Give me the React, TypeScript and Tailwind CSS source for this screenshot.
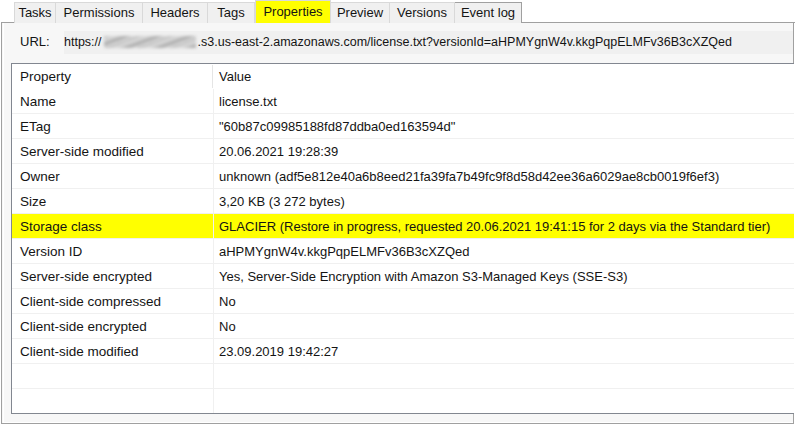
const tabs = [
  { label: 'Tasks', w: 'w-[42px]' },
  { label: 'Permissions', w: 'w-[87px]' },
  { label: 'Headers', w: 'w-[65px]' },
  { label: 'Tags', w: 'w-[47px]' },
  { label: 'Properties', w: 'w-[76px]', active: true },
  { label: 'Preview', w: 'w-[59px]' },
  { label: 'Versions', w: 'w-[65px]' },
  { label: 'Event log', w: 'w-[67px]', last: true },
]

const rows: [string, string][] = [
  ['Name', 'license.txt'],
  ['ETag', '"60b87c09985188fd87ddba0ed163594d"'],
  ['Server-side modified', '20.06.2021 19:28:39'],
  ['Owner', 'unknown (adf5e812e40a6b8eed21fa39fa7b49fc9f8d58d42ee36a6029ae8cb0019f6ef3)'],
  ['Size', '3,20 KB (3 272 bytes)'],
  ['Storage class', 'GLACIER (Restore in progress, requested 20.06.2021 19:41:15 for 2 days via the Standard tier)'],
  ['Version ID', 'aHPMYgnW4v.kkgPqpELMFv36B3cXZQed'],
  ['Server-side encrypted', 'Yes, Server-Side Encryption with Amazon S3-Managed Keys (SSE-S3)'],
  ['Client-side compressed', 'No'],
  ['Client-side encrypted', 'No'],
  ['Client-side modified', '23.09.2019 19:42:27'],
  ['', ''],
  ['', ''],
]

export default function App() {
  return (
    <div className="w-[795px] h-[425px] bg-white overflow-hidden text-[13px] text-[#141414] font-['Liberation_Sans',Arial,sans-serif]">
      {/* tab strip */}
      <div className="flex items-end h-[23px] pl-[13px] border-b border-[#a0a0a0] ml-[1px]">
        {tabs.map((t) => (
          <div
            key={t.label}
            className={
              t.active
                ? `${t.w} h-[23px] -mb-px bg-[#ffff00] border border-b-0 border-[#d9d9d9] flex items-center justify-center pb-[1px]`
                : `${t.w} h-[21px] -mb-px bg-[#f0f0f0] border-t border-r border-[#d9d9d9] flex items-center justify-center ${
                    t.last ? 'border-r-[#a0a0a0] border-t-[#a0a0a0]' : ''
                  } ${t.label === 'Tasks' ? 'border-l' : ''}`
            }
          >
            {t.label}
          </div>
        ))}
      </div>

      {/* panel */}
      <div className="ml-[1px] w-[793px] h-[401px] border-l border-r border-b border-[#a0a0a0] bg-[#f7f7f7]">
        <div className="h-full border-l border-b border-white ml-[1px] pl-[7px] pb-[8px] flex flex-col">
          {/* url row */}
          <div className="flex items-center h-[24px] mt-[7px] mb-[9px]">
            <div className="w-[53px] pl-[9px]">URL:</div>
            <div className="flex-1 h-[23px] bg-[#f0f0f0] flex items-center whitespace-nowrap overflow-hidden text-[12.5px]">
              <span>https://</span>
              <span className="inline-block w-[92px] h-[12px] mx-[2px] blur-[1.5px] bg-[repeating-linear-gradient(160deg,#bdbdbd_0px,#dcdcdc_4px,#a8a8a8_8px,#e6e6e6_11px)]" />
              <span>.s3.us-east-2.amazonaws.com/license.txt?versionId=aHPMYgnW4v.kkgPqpELMFv36B3cXZQed</span>
            </div>
          </div>

          {/* properties table */}
          <div className="flex-1 border-l border-t border-b border-[#828790] bg-white overflow-hidden -mr-[1px]">
            <div className="flex h-[25px] items-center leading-[16px]">
              <div className="w-[201px] pl-[8px] h-[23px] pt-[1px] flex items-center border-r border-[#e5e5e5] text-[13.5px]">Property</div>
              <div className="pl-[6px] pt-[1px]">Value</div>
            </div>
            {rows.map(([k, v], i) => (
              <div
                key={i}
                className={`flex h-[25px] border-b border-[#f0f0f0] leading-[16px] ${k === 'Storage class' ? 'bg-[#ffff00]' : ''}`}
              >
                <div className="w-[202px] pl-[8px] pt-[1px] flex items-center border-r border-[#f0f0f0] whitespace-nowrap text-[13.5px]">{k}</div>
                <div className="pl-[5px] pt-[1px] flex items-center whitespace-nowrap">{v}</div>
              </div>
            ))}
          </div>
        </div>
      </div>
    </div>
  )
}
